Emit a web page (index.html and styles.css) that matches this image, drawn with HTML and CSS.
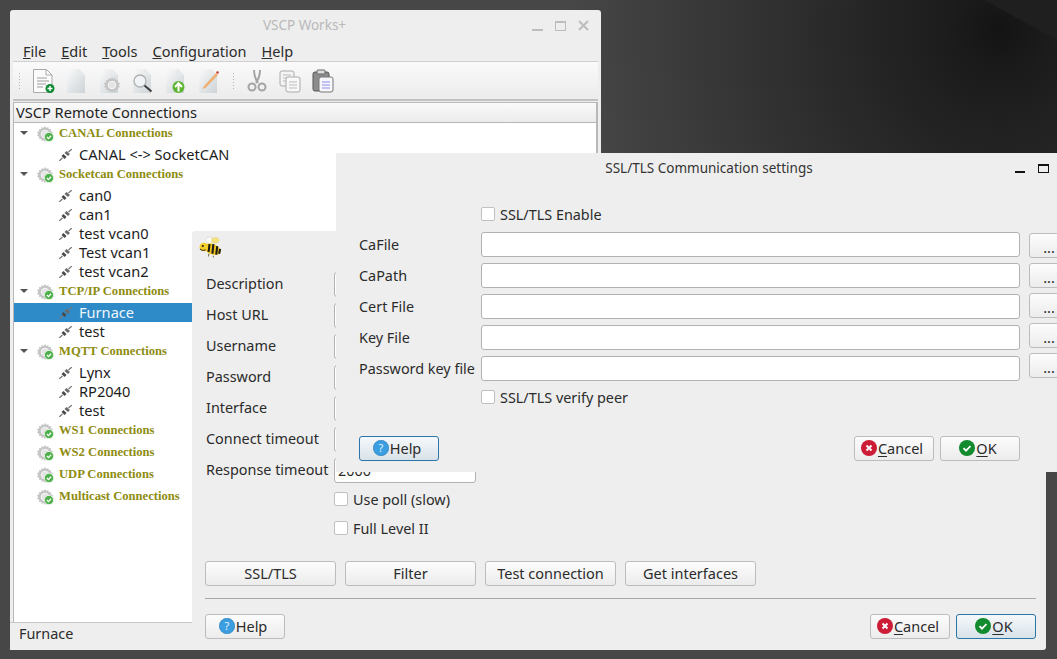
FILE: index.html
```html
<!DOCTYPE html>
<html lang="en">
<head>
    <meta charset="UTF-8">
    <title>VSCP Works+</title>
    <link rel="stylesheet" href="styles.css">
</head>
<body>
    <svg class="sprites" width="0" height="0">
        <defs>
            <linearGradient id="paper" x1="0" y1="0" x2="1" y2="1">
                <stop offset="0" stop-color="#fafafa"/>
                <stop offset="1" stop-color="#ccd3d7"/>
            </linearGradient>
            <symbol id="sheet" viewBox="0 0 24 24">
                <path d="M3 0h12l6 6v18H3z" fill="url(#paper)"/>
                <path d="M15 0v6h6z" fill="#e6eaec"/>
            </symbol>
            <symbol id="gear" viewBox="0 0 16 16">
                <path d="M8 0l1.300 2 2-1 .4 2.300 2.300-.3-.3 2.300 2.300.7-1.200 2 1.200 2-2.300.7.3 2.300-2.300-.3-.4 2.300-2-1L8 16l-1.300-2-2 1-.4-2.300-2.300.3.3-2.300L0 10l1.200-2L0 6l2.300-.7L2 3l2.300.3L4.700 1l2 1z" fill="#c4c4c4"/>
                <circle cx="8" cy="8" r="3.800" fill="#e4e4e4" stroke="#f6f6f6"/>
            </symbol>
            <symbol id="conn" viewBox="0 0 17 16">
                <use href="#gear" x="0" y="0" width="16" height="16"/>
                <circle cx="12" cy="11" r="4.600" fill="#4eb04a" stroke="#eaf5e8" stroke-width=".8"/>
                <path d="M9.900 11l1.600 1.600 2.600-2.900" fill="none" stroke="#fff" stroke-width="1.300"/>
            </symbol>
            <symbol id="plug" viewBox="0 0 13 12">
                <path d="M0 12l3.500-3M9.500 3l3.500-3" stroke="#777" stroke-width="1.300" fill="none"/>
                <path d="M2.500 7l2-2 3 3-2 2z" fill="#4a4a4a"/>
                <path d="M5.500 4l2-2 3.500 3-2 2z" fill="#6a6a6a"/>
            </symbol>
            <symbol id="help" viewBox="0 0 16 16">
                <circle cx="8" cy="8" r="7.700" fill="#3a9ee0" stroke="#2a78b0" stroke-width=".6"/>
                <text x="8" y="12" text-anchor="middle" class="help-mark">?</text>
            </symbol>
            <symbol id="cancel" viewBox="0 0 16 16">
                <circle cx="8" cy="8" r="8" fill="#cc1c36"/>
                <path d="M5.500 5.500l5 5M10.500 5.500l-5 5" stroke="#fff" stroke-width="2"/>
            </symbol>
            <symbol id="ok" viewBox="0 0 16 16">
                <circle cx="8" cy="8" r="8" fill="#128a2e"/>
                <path d="M4.500 8.200l2.500 2.500 4.500-4.700" fill="none" stroke="#fff" stroke-width="1.800"/>
            </symbol>
        </defs>
    </svg>

    <div class="wedge"></div>

    <!-- main window -->
    <div class="window main-window">
        <div class="titlebar">
            <span class="title inactive">VSCP Works+</span>
            <div class="wm-buttons inactive-buttons">
                <span class="wm-min"></span>
                <span class="wm-max"></span>
                <svg class="wm-close" width="11" height="11" viewBox="0 0 11 11"><path d="M1 1l9 9M10 1l-9 9" stroke="#bdbdbd" stroke-width="2"/></svg>
            </div>
        </div>
        <div class="menubar">
            <span><u>F</u>ile</span>
            <span><u>E</u>dit</span>
            <span><u>T</u>ools</span>
            <span><u>C</u>onfiguration</span>
            <span><u>H</u>elp</span>
        </div>
        <div class="toolbar">
            <span class="grip"></span>
            <svg class="tool" viewBox="0 0 24 24">
                <path d="M2.500 .5h13l5.500 5.500v17.500H2.500z" fill="#fbfbfb" stroke="#a9a9a9"/>
                <path d="M15 1v5h6" fill="none" stroke="#a9a9a9"/>
                <path d="M6 9h10M6 12h12M6 15h9M6 18h6" stroke="#9c9c9c"/>
                <circle cx="19" cy="19.500" r="4.500" fill="#0f8a34"/>
                <path d="M16.500 19.500h5M19 17v5" stroke="#fff" stroke-width="1.500"/>
            </svg>
            <svg class="tool" viewBox="0 0 24 24"><use href="#sheet"/></svg>
            <svg class="tool" viewBox="0 0 24 24">
                <use href="#sheet"/>
                <use href="#gear" x="7" y="8" width="16" height="16"/>
            </svg>
            <svg class="tool" viewBox="0 0 24 24">
                <use href="#sheet"/>
                <circle cx="10" cy="12" r="6" fill="#f0f4f7" stroke="#b0b0b0" stroke-width="1.300"/>
                <path d="M14.500 16.500l7 6" stroke="#3c3c3c" stroke-width="2"/>
            </svg>
            <svg class="tool" viewBox="0 0 24 24">
                <use href="#sheet"/>
                <circle cx="15.500" cy="18" r="6" fill="#5cb531"/>
                <path d="M15.500 22.500v-8M12 18l3.500-3.800 3.500 3.800" fill="none" stroke="#fff" stroke-width="2"/>
            </svg>
            <svg class="tool" viewBox="0 0 24 24">
                <use href="#sheet"/>
                <path d="M8 17L20 4l2 2-12.500 13-3 1z" fill="#efb074"/>
                <circle cx="21.500" cy="3.500" r="1.300" fill="#c8403a"/>
            </svg>
            <span class="grip second-grip"></span>
            <svg class="tool" viewBox="0 0 24 24">
                <path d="M9 1c0 6 2 10 4 13M15 1c0 6-2 10-4 13" fill="none" stroke="#a4a4a4" stroke-width="2"/>
                <circle cx="7" cy="18" r="3.500" fill="none" stroke="#a4a4a4" stroke-width="2"/>
                <circle cx="17" cy="18" r="3.500" fill="none" stroke="#a4a4a4" stroke-width="2"/>
            </svg>
            <svg class="tool" viewBox="0 0 24 24">
                <rect x="2" y="2" width="14" height="15" rx="2" fill="#f4f4f4" stroke="#aaa"/>
                <path d="M5 6h8M5 9h8M5 12h5" stroke="#bbb"/>
                <rect x="8" y="8" width="14" height="15" rx="2" fill="#f8f8f8" stroke="#aaa"/>
                <path d="M11 13h8M11 16h8M11 19h8" stroke="#bbb"/>
            </svg>
            <svg class="tool" viewBox="0 0 24 24">
                <rect x="2" y="3" width="16" height="19" rx="2" fill="#8c8c8c" stroke="#555"/>
                <rect x="6" y="1" width="8" height="4" rx="1" fill="#ddd" stroke="#666"/>
                <rect x="8" y="8" width="14" height="15" rx="2" fill="#f6f6fb" stroke="#777"/>
                <path d="M11 13h8M11 16h8M11 19h8" stroke="#8d8dea"/>
            </svg>
        </div>
        <div class="tree-header">VSCP Remote Connections</div>
        <div class="tree">
            <div class="cat"><i class="arrow"></i><svg class="conn-icon"><use href="#conn"/></svg><b>CANAL Connections</b></div>
            <div class="leaf"><svg class="plug-icon"><use href="#plug"/></svg>CANAL &lt;-&gt; SocketCAN</div>
            <div class="cat"><i class="arrow"></i><svg class="conn-icon"><use href="#conn"/></svg><b>Socketcan Connections</b></div>
            <div class="leaf"><svg class="plug-icon"><use href="#plug"/></svg>can0</div>
            <div class="leaf"><svg class="plug-icon"><use href="#plug"/></svg>can1</div>
            <div class="leaf"><svg class="plug-icon"><use href="#plug"/></svg>test vcan0</div>
            <div class="leaf"><svg class="plug-icon"><use href="#plug"/></svg>Test vcan1</div>
            <div class="leaf"><svg class="plug-icon"><use href="#plug"/></svg>test vcan2</div>
            <div class="cat"><i class="arrow"></i><svg class="conn-icon"><use href="#conn"/></svg><b>TCP/IP Connections</b></div>
            <div class="leaf selected"><svg class="plug-icon"><use href="#plug"/></svg>Furnace</div>
            <div class="leaf"><svg class="plug-icon"><use href="#plug"/></svg>test</div>
            <div class="cat"><i class="arrow"></i><svg class="conn-icon"><use href="#conn"/></svg><b>MQTT Connections</b></div>
            <div class="leaf"><svg class="plug-icon"><use href="#plug"/></svg>Lynx</div>
            <div class="leaf"><svg class="plug-icon"><use href="#plug"/></svg>RP2040</div>
            <div class="leaf"><svg class="plug-icon"><use href="#plug"/></svg>test</div>
            <div class="cat no-kids"><svg class="conn-icon"><use href="#conn"/></svg><b>WS1 Connections</b></div>
            <div class="cat no-kids"><svg class="conn-icon"><use href="#conn"/></svg><b>WS2 Connections</b></div>
            <div class="cat no-kids"><svg class="conn-icon"><use href="#conn"/></svg><b>UDP Connections</b></div>
            <div class="cat no-kids"><svg class="conn-icon"><use href="#conn"/></svg><b>Multicast Connections</b></div>
        </div>
        <div class="statusbar">Furnace</div>
    </div>

    <!-- connection dialog -->
    <div class="window conn-dialog">
        <div class="bee-row">
            <svg class="bee" viewBox="0 0 24 22">
                <ellipse cx="11" cy="4" rx="4" ry="3.500" fill="#fbfbf6" stroke="#d0d0c8" stroke-width=".6"/>
                <ellipse cx="17" cy="4" rx="4" ry="3" fill="#f6e27a" stroke="#d8d0a0" stroke-width=".6"/>
                <path d="M7 8c5-2 12 0 15 5 1 3 0 6-3 6-5 1-11-2-12-5z" fill="#f2c51e"/>
                <path d="M11 8l-1 8M15 8l-1 10M19 10l-1 9M22 13l-1 5" stroke="#1c1c14" stroke-width="2.200"/>
                <circle cx="5" cy="11" r="4.500" fill="#f6cf2a"/>
                <circle cx="4" cy="10" r="1.100" fill="#222"/>
                <path d="M1 13c1.500 1.500 3 2 6 1" fill="none" stroke="#222"/>
                <path d="M10 18v3M15 20v2" stroke="#8a7a60" stroke-width="1.200"/>
            </svg>
        </div>
        <div class="conn-form">
            <label>Description</label><div class="field"></div>
            <label>Host URL</label><div class="field"></div>
            <label>Username</label><div class="field"></div>
            <label>Password</label><div class="field"></div>
            <label>Interface</label><div class="field"></div>
            <label>Connect timeout</label><div class="field"></div>
            <label>Response timeout</label><div class="field">2000</div>
        </div>
        <div class="check conn-check first-check"><span class="box"></span>Use poll (slow)</div>
        <div class="check conn-check"><span class="box"></span>Full Level II</div>
        <div class="action-row">
            <button>SSL/TLS</button>
            <button>Filter</button>
            <button>Test connection</button>
            <button>Get interfaces</button>
        </div>
        <hr class="rule">
        <div class="footer">
            <button class="icon-btn"><svg class="btn-icon"><use href="#help"/></svg>Help</button>
            <span class="spacer"></span>
            <button class="icon-btn"><svg class="btn-icon"><use href="#cancel"/></svg><span><u>C</u>ancel</span></button>
            <button class="icon-btn focused"><svg class="btn-icon"><use href="#ok"/></svg><span><u>O</u>K</span></button>
        </div>
    </div>

    <!-- ssl settings dialog -->
    <div class="window ssl-dialog">
        <div class="ssl-title">
            <span class="title">SSL/TLS Communication settings</span>
            <div class="wm-buttons active-buttons">
                <span class="wm-min"></span>
                <span class="wm-max"></span>
            </div>
        </div>
        <div class="ssl-body">
            <div class="check ssl-check top-check"><span class="box"></span>SSL/TLS Enable</div>
            <div class="ssl-main">
                <div class="ssl-form">
                    <label>CaFile</label><div class="field"></div>
                    <label>CaPath</label><div class="field"></div>
                    <label>Cert File</label><div class="field"></div>
                    <label>Key File</label><div class="field"></div>
                    <label>Password key file</label><div class="field"></div>
                </div>
                <div class="browse-col">
                    <button>...</button>
                    <button>...</button>
                    <button>...</button>
                    <button>...</button>
                    <button>...</button>
                </div>
            </div>
            <div class="check ssl-check"><span class="box"></span>SSL/TLS verify peer</div>
            <div class="footer ssl-footer">
                <button class="icon-btn focused"><svg class="btn-icon"><use href="#help"/></svg>Help</button>
                <span class="spacer"></span>
                <button class="icon-btn"><svg class="btn-icon"><use href="#cancel"/></svg><span><u>C</u>ancel</span></button>
                <button class="icon-btn"><svg class="btn-icon"><use href="#ok"/></svg><span><u>O</u>K</span></button>
            </div>
        </div>
    </div>
</body>
</html>
```

FILE: styles.css
```css
html, body {
    margin: 0;
    height: 100%;
}
body {
    position: relative;
    width: 1057px;
    height: 659px;
    overflow: hidden;
    font-family: "Noto Sans", Arial, sans-serif;
    font-size: 14.4px;
    color: #2b2b2b;
    background: radial-gradient(ellipse 430px 460px at 1000px 30px, #141414 0, #1c1c1c 12%, #474747 100%) #474747;
}
.sprites {
    position: absolute;
}
.wedge {
    position: absolute;
    top: 0;
    right: 0;
    width: 73px;
    height: 40px;
    background: #1f1f1f;
    clip-path: polygon(0 0, 100% 0, 100% 100%);
}
.window {
    position: absolute;
    background: #eeeeee;
    box-sizing: border-box;
}
.main-window {
    left: 10px;
    top: 10px;
    width: 591px;
    height: 640px;
    border-radius: 3px 3px 0 0;
    display: flex;
    flex-direction: column;
}
.conn-dialog {
    left: 192px;
    top: 231px;
    width: 854px;
    height: 419px;
    border-radius: 3px;
}
.ssl-dialog {
    left: 336px;
    top: 153px;
    width: 746px;
    height: 319px;
}

/* title bars */
.titlebar {
    height: 30px;
    flex: none;
    padding-right: 2px;
    box-sizing: border-box;
    display: flex;
    align-items: center;
    justify-content: center;
    position: relative;
}
.title {
    font-size: 13.5px;
    color: #333;
}
.title.inactive {
    color: #b9b9b9;
}
.wm-buttons {
    position: absolute;
    display: flex;
    align-items: flex-end;
}
.inactive-buttons {
    top: 10px;
    right: 12px;
    height: 11px;
    gap: 12px;
}
.inactive-buttons .wm-min {
    width: 11px;
    height: 2px;
    background: #bdbdbd;
}
.inactive-buttons .wm-max {
    width: 9px;
    height: 7px;
    border: 1px solid #bdbdbd;
    border-top-width: 2px;
}
.ssl-title {
    height: 28px;
    padding-top: 2px;
    box-sizing: border-box;
    display: flex;
    align-items: center;
    justify-content: center;
    position: relative;
}
.active-buttons {
    top: 11px;
    right: 33px;
    height: 9px;
    gap: 13px;
}
.active-buttons .wm-min {
    width: 10px;
    height: 2px;
    background: #111;
}
.active-buttons .wm-max {
    width: 9px;
    height: 6px;
    border: 1px solid #111;
    border-top-width: 2px;
}

/* main window */
.menubar {
    height: 21px;
    flex: none;
    display: flex;
    gap: 15px;
    align-items: center;
    font-size: 14.5px;
    border-bottom: 1px solid #d0d0d0;
    margin: 0 3px;
    padding-left: 10px;
}
.toolbar {
    height: 37px;
    flex: none;
    margin: 0 3px;
    display: flex;
    align-items: center;
    padding-left: 5px;
    background: linear-gradient(#fafafa, #ececec);
    border-bottom: 2px solid #c2c2c2;
}
.grip {
    width: 3px;
    height: 17px;
    margin-right: 10px;
    background: radial-gradient(circle, #b4b4b4 0.6px, transparent 0.8px) 0 0 / 3px 3px;
}
.second-grip {
    margin: 0 10px 0 3px;
}
.tool {
    width: 24px;
    height: 24px;
    margin-right: 9px;
}
.tree-header {
    height: 19px;
    flex: none;
    margin: 1px 3px 0;
    padding-left: 2px;
    font-size: 14.6px;
    line-height: 19px;
    color: #222;
    background: linear-gradient(#fafafa, #ebebeb);
    border: 1px solid #b8b8b8;
    border-width: 1px 2px 1px 1px;
}
.tree {
    flex: 1;
    margin: 0 3px;
    background: #fff;
    border: 1px solid #b8b8b8;
    border-width: 0 2px 0 1px;
    font-size: 14.6px;
    color: #1c1c1c;
}
.cat {
    height: 22px;
    box-sizing: border-box;
    padding-bottom: 2px;
    display: flex;
    align-items: center;
}
.cat b {
    font-family: "Liberation Serif", serif;
    font-size: 12.6px;
    color: #8e8c10;
}
.arrow {
    width: 0;
    height: 0;
    margin: 0 9px 0 6px;
    border: 4px solid transparent;
    border-top: 4px solid #555;
    border-bottom: none;
}
.no-kids {
    padding-left: 23px;
}
.conn-icon {
    width: 17px;
    height: 16px;
    margin: 2px 5px 0 0;
}
.leaf {
    height: 19px;
    box-sizing: border-box;
    padding: 0 0 2px 45px;
    display: flex;
    align-items: center;
}
.plug-icon {
    width: 13px;
    height: 12px;
    margin: 2px 7px 0 0;
}
.selected {
    background: #2f8bc8;
    color: #eef5fa;
}
.statusbar {
    height: 28px;
    flex: none;
    padding: 0 0 6px 9px;
    box-sizing: border-box;
    display: flex;
    align-items: center;
    border-top: 1px solid #c8c8c8;
}

/* dialogs */
label {
    display: block;
    align-self: center;
    padding-bottom: 2px;
}
.field {
    height: 25px;
    box-sizing: border-box;
    background: #fff;
    border: 1px solid #b2b2b2;
    border-radius: 3px;
    padding: 3px 3px;
    line-height: 17px;
}
.bee-row {
    height: 41px;
    box-sizing: border-box;
    padding: 5px 0 0 7px;
}
.bee {
    display: block;
    width: 23px;
    height: 22px;
}
.conn-form {
    display: grid;
    grid-template-columns: 128px 142px;
    grid-auto-rows: 25px;
    row-gap: 6px;
    padding-left: 14px;
}
.check {
    display: flex;
    align-items: center;
    height: 18px;
}
.box {
    width: 14px;
    height: 14px;
    box-sizing: border-box;
    background: #fff;
    border: 1px solid #c0c0c0;
    border-radius: 2px;
    margin-right: 5px;
}
.conn-check {
    margin: 11px 0 0 142px;
}
.first-check {
    margin-top: 7px;
}
.action-row {
    display: flex;
    gap: 9px;
    margin: 24px 0 0 13px;
}
button {
    height: 25px;
    box-sizing: border-box;
    padding: 0 0 2px;
    font: inherit;
    font-size: 14.5px;
    color: #2b2b2b;
    background: linear-gradient(#fcfcfc, #ececec);
    border: 1px solid #bcbcbc;
    border-radius: 3px;
}
.action-row button {
    width: 131px;
}
.rule {
    margin: 12px 10px 0 13px;
    border: none;
    border-top: 1px solid #a8a8a8;
}
.footer {
    display: flex;
    gap: 6px;
    margin: 15px 10px 0 13px;
}
.spacer {
    flex: 1;
}
.icon-btn {
    width: 80px;
    display: flex;
    align-items: center;
    justify-content: center;
    gap: 1px;
    padding-right: 4px;
}
.icon-btn u {
    text-underline-offset: 2px;
}
.btn-icon {
    flex: none;
    width: 16px;
    height: 16px;
}
.help-mark {
    font-family: "Noto Sans", sans-serif;
    font-size: 11px;
    fill: #e8f4fc;
}
.focused {
    border-color: #2b76a8;
    background: linear-gradient(#f6f9fb, #d8e2e9);
}

/* ssl dialog */
.ssl-body {
    padding-left: 23px;
}
.ssl-form label {
    padding-bottom: 0;
}
.ssl-check {
    margin-left: 122px;
}
.top-check {
    margin-top: 24px;
}
.ssl-main {
    display: flex;
    gap: 9px;
    margin-top: 9px;
}
.ssl-form {
    display: grid;
    grid-template-columns: 122px 539px;
    grid-auto-rows: 25px;
    row-gap: 6px;
}
.browse-col {
    display: flex;
    flex-direction: column;
    gap: 5px;
    padding-top: 1px;
}
.browse-col button {
    width: 40px;
    padding-top: 3px;
    padding-bottom: 0;
}
.ssl-check:not(.top-check) {
    margin-top: 7px;
}
.ssl-footer {
    margin: 30px 62px 0 0;
}
```
